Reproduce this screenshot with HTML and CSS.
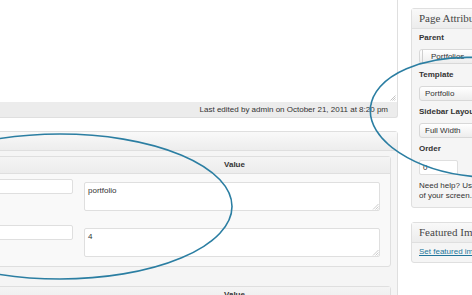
FILE: index.html
```html
<!DOCTYPE html>
<html>
<head>
<meta charset="utf-8">
<link rel="stylesheet" href="styles.css">
</head>
<body>
<div class="page">
  <div class="main">
    <div class="editor">
      <svg class="grip" width="6" height="6" viewBox="0 0 6 6"><path d="M5.5 0.5 L0.5 5.5 M5.5 2.5 L2.5 5.5 M5.5 4.5 L4.5 5.5" stroke="#b5b5b5" stroke-width="0.8" fill="none"/></svg>
    </div>
    <div class="status">Last edited by admin on October 21, 2011 at 8:20 pm</div>
    <div class="postbox cf">
      <div class="hndle"></div>
      <div class="inside">
        <div class="fields">
          <div class="thead"><span></span><span>Value</span></div>
          <div class="row">
            <div class="key"><input type="text"></div>
            <div class="val"><div class="ta"><textarea>portfolio</textarea><svg class="tgrip" width="7" height="7" viewBox="0 0 7 7"><path d="M6.5 1 L1 6.5 M6.5 3.5 L3.5 6.5 M6.5 5.5 L5.5 6.5" stroke="#bdbdbd" stroke-width="0.8" fill="none"/></svg></div></div>
          </div>
          <div class="row">
            <div class="key"><input type="text"></div>
            <div class="val"><div class="ta"><textarea>4</textarea><svg class="tgrip" width="7" height="7" viewBox="0 0 7 7"><path d="M6.5 1 L1 6.5 M6.5 3.5 L3.5 6.5 M6.5 5.5 L5.5 6.5" stroke="#bdbdbd" stroke-width="0.8" fill="none"/></svg></div></div>
          </div>
        </div>
        <div class="addnew"></div>
        <div class="fields">
          <div class="thead"><span></span><span>Value</span></div>
          <div class="row">
            <div class="key"><input type="text"></div>
            <div class="val"><div class="ta"><textarea></textarea></div></div>
          </div>
        </div>
      </div>
    </div>
  </div>
  <div class="side">
    <div class="postbox">
      <h3>Page Attributes</h3>
      <div class="inside attrs">
        <label>Parent</label>
        <div class="sel parent"><span>Portfolios</span></div>
        <label>Template</label>
        <div class="sel">Portfolio</div>
        <label>Sidebar Layout</label>
        <div class="sel">Full Width</div>
        <label>Order</label>
        <div class="order">0</div>
        <p class="help">Need help? Use the Help tab in the upper right<br>of your screen.</p>
      </div>
    </div>
    <div class="postbox featured">
      <h3>Featured Image</h3>
      <div class="inside feat"><a href="#">Set featured image</a></div>
    </div>
  </div>
  <svg class="marks" width="472" height="295" viewBox="0 0 472 295">
    <ellipse cx="60" cy="206.5" rx="172" ry="72.5" fill="none" stroke="#2b7ea2" stroke-width="1.6"/>
    <ellipse cx="481" cy="117.5" rx="111" ry="59.5" transform="rotate(5 481 117.5)" fill="none" stroke="#2b7ea2" stroke-width="1.6"/>
  </svg>
</div>
</body>
</html>
```

FILE: styles.css
```css
* { box-sizing: border-box; }
html, body { margin: 0; padding: 0; }
body {
  font-family: "Liberation Sans", Arial, sans-serif;
  font-size: 8px;
  color: #333;
  background: #fff;
}
.page {
  position: relative;
  width: 472px;
  height: 295px;
  overflow: hidden;
  display: flex;
  gap: 13px;
}
.main {
  flex: 0 0 598px;
  margin-left: -200px;
}
.editor {
  height: 102px;
  background: #fff;
  border-left: 1px solid #dfdfdf;
  border-right: 1px solid #dfdfdf;
  display: flex;
  justify-content: flex-end;
  align-items: flex-end;
  padding: 0 1px 1px 0;
}
.grip { display: block; }
.status {
  height: 16px;
  background: #ececec;
  border: 1px solid #dfdfdf;
  border-top: none;
  border-radius: 0 0 3px 3px;
  text-align: right;
  padding-right: 9px;
  line-height: 15px;
}
.postbox {
  border: 1px solid #dfdfdf;
  border-radius: 3px;
  background: #f5f5f5;
}
.cf { margin-top: 13px; }
.cf .hndle {
  height: 19px;
  border-bottom: 1px solid #dfdfdf;
  background: linear-gradient(#f9f9f9, #ededed);
}
.cf .inside { padding: 5px 6px 10px; }
.fields {
  border: 1px solid #dfdfdf;
  border-radius: 3px;
  background: #f9f9f9;
}
.thead {
  display: grid;
  grid-template-columns: 271px 1fr;
  height: 17px;
  line-height: 16px;
  background: linear-gradient(#f4f4f4, #ececec);
  border-bottom: 1px solid #dfdfdf;
  font-weight: bold;
  text-align: center;
}
.row {
  display: grid;
  grid-template-columns: 271px 1fr;
}
.key { padding: 5px 6px 0 8px; }
.key input {
  display: block;
  width: 100%;
  height: 15px;
  margin: 0;
  border: 1px solid #dfdfdf;
  border-radius: 2px;
  background: #fff;
  font: 8px "Liberation Sans", Arial, sans-serif;
  color: #333;
  padding: 0 3px;
}
.val { padding: 8px 10px 9px 5px; }
.ta { position: relative; }
.ta textarea {
  display: block;
  width: 100%;
  height: 29px;
  margin: 0;
  border: 1px solid #dfdfdf;
  border-radius: 2px;
  background: #fff;
  font: 8px/10px "Liberation Sans", Arial, sans-serif;
  color: #333;
  padding: 3px 3px;
  resize: none;
}
.tgrip {
  position: absolute;
  right: 1px;
  bottom: 1px;
}
.addnew { height: 19px; }
.side {
  flex: 0 0 280px;
  padding-top: 8px;
}
.side h3 {
  margin: 0;
  height: 20px;
  padding-left: 7px;
  border-bottom: 1px solid #dfdfdf;
  background: linear-gradient(#f9f9f9, #ececec);
  font: normal 11px/19px "Liberation Serif", "Times New Roman", serif;
  color: #464646;
}
.attrs { padding: 3px 7px 6px; }
.attrs label {
  display: block;
  font-weight: bold;
  line-height: 12px;
}
.sel {
  margin: 5px 0;
  height: 15px;
  width: 260px;
  border: 1px solid #d8d8d8;
  border-radius: 3px;
  background: linear-gradient(#ffffff, #ededed);
  line-height: 13px;
  padding-left: 5px;
}
.sel.parent { padding-left: 2px; }
.sel.parent span {
  display: block;
  border-left: 1px solid #cfcfcf;
  padding-left: 8px;
}
.order {
  margin-top: 5px;
  width: 39px;
  height: 15px;
  border: 1px solid #dfdfdf;
  border-radius: 2px;
  background: #fff;
  line-height: 13px;
  padding-left: 3px;
}
.help {
  margin: 6px 0 0;
  line-height: 10px;
}
.featured { margin-top: 14px; }
.feat {
  padding: 4px 7px 5px;
  line-height: 10px;
}
.feat a { color: #21759b; text-decoration: underline; }
.marks {
  position: absolute;
  left: 0;
  top: 0;
  pointer-events: none;
}
```
